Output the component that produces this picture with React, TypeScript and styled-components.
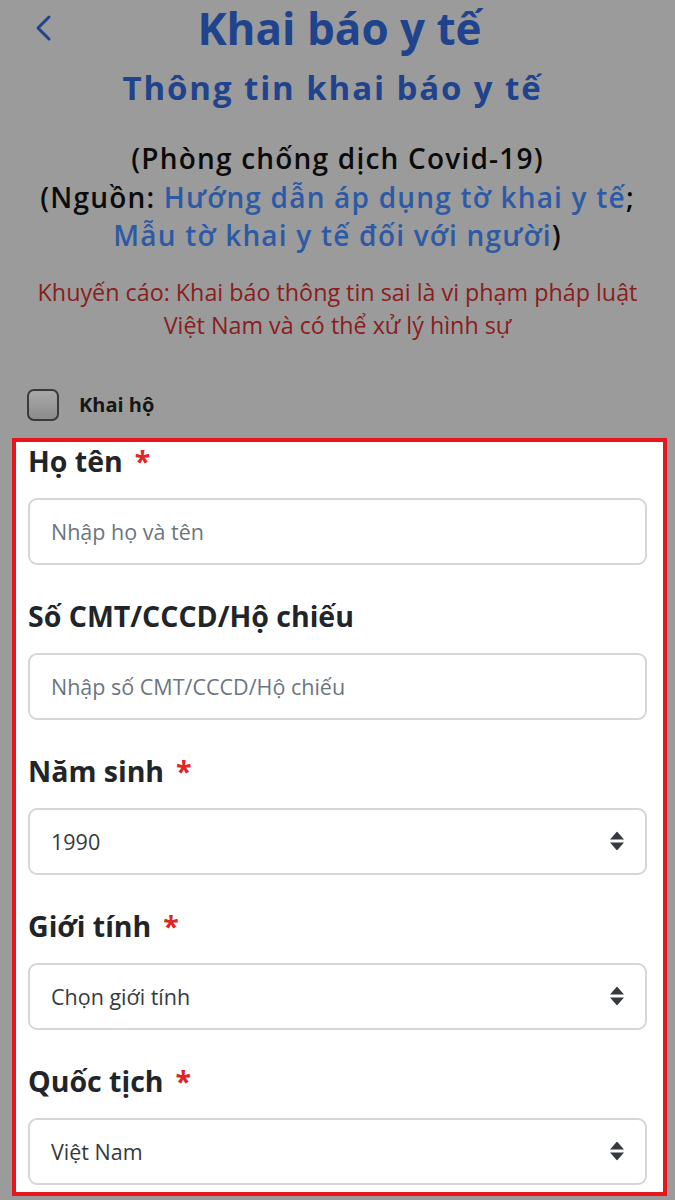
import React from "react";
import styled, { createGlobalStyle } from "styled-components";

const GlobalStyle = createGlobalStyle`
  * { box-sizing: border-box; }
  html, body { margin: 0; padding: 0; background: #9b9b9b; }
  body { font-family: "Open Sans", "Noto Sans", sans-serif; }
`;

const Page = styled.div`
  background: #9b9b9b;
  min-height: 1200px;
  padding: 2px 8px 4px 12px;
  display: flex;
  flex-direction: column;
`;

const Header = styled.header`
  display: grid;
  grid-template-columns: 1fr auto 1fr;
  align-items: center;
  margin: 0 -8px 0 -12px;
  padding: 0 30px 0 34px;
`;

const BackButton = styled.button`
  justify-self: start;
  background: none;
  border: none;
  padding: 0;
  width: 20px;
  height: 28px;
  display: flex;
  align-items: center;
  cursor: pointer;
`;

const Title = styled.h1`
  margin: 0;
  font-size: 44px;
  line-height: 52px;
  font-weight: 700;
  color: #1f438c;
  text-align: center;
`;

const Subtitle = styled.h2`
  margin: 12px 0 0;
  padding-right: 14px;
  font-size: 33px;
  line-height: 43px;
  font-weight: 700;
  letter-spacing: 1.9px;
  color: #1f438c;
  text-align: center;
`;

const Info = styled.p`
  margin: 30px -8px 0 -12px;
  font-size: 28px;
  line-height: 38.5px;
  font-weight: 600;
  letter-spacing: 1.2px;
  color: #0b0b0b;
  text-align: center;
`;

const Link = styled.a`
  color: #2c5aa6;
  text-decoration: none;
`;

const Warning = styled.p`
  margin: 21px -8px 0 -12px;
  font-size: 23.3px;
  line-height: 33px;
  font-weight: 400;
  color: #8a1d1d;
  text-align: center;
`;

const CheckRow = styled.label`
  display: flex;
  align-items: center;
  gap: 20px;
  margin: 47px 0 0 15px;
  height: 32px;
  font-size: 20px;
  font-weight: 700;
  color: #161616;
  cursor: pointer;
`;

const CheckBox = styled.span`
  width: 32px;
  height: 32px;
  border: 2px solid #3a3a3a;
  border-radius: 7px;
  background: linear-gradient(180deg, #a9a9a9 0%, #8c8c8c 100%);
`;

const Highlight = styled.section`
  margin-top: 17px;
  background: #ffffff;
  border: 4px solid #e8161c;
  padding: 0 16px 7px 12px;
  display: flex;
  flex-direction: column;
  gap: 32px;
`;

const FieldBlock = styled.div`
  display: flex;
  flex-direction: column;
  gap: 18px;
`;

const Label = styled.div`
  font-size: 28.5px;
  line-height: 38px;
  font-weight: 700;
  color: #212529;
`;

const Star = styled.span`
  color: #e02424;
  margin-left: 12px;
`;

const controlStyles = `
  width: 100%;
  height: 67px;
  border: 2px solid #d3d6da;
  border-radius: 9px;
  background: #ffffff;
  padding: 0 60px 0 21px;
  font-family: "Open Sans", "Noto Sans", sans-serif;
  font-size: 21.5px;
  color: #343a40;
  outline: none;
`;

const TextInput = styled.input`
  ${controlStyles}
  &::placeholder { color: #6c757d; opacity: 1; }
`;

const SelectWrap = styled.div`
  position: relative;
`;

const Select = styled.select`
  ${controlStyles}
  appearance: none;
  -webkit-appearance: none;
`;

const SortIcon = styled.svg`
  position: absolute;
  right: 23px;
  top: 50%;
  transform: translateY(-50%);
  pointer-events: none;
`;

const Sort = () => (
  <SortIcon width="14" height="19" viewBox="0 0 14 19">
    <path d="M7 0 L14 8 L0 8 Z" fill="#343a40" />
    <path d="M0 11 L14 11 L7 19 Z" fill="#343a40" />
  </SortIcon>
);

const Field: React.FC<{ label: string; required?: boolean; children: React.ReactNode }> = ({
  label,
  required,
  children,
}) => (
  <FieldBlock>
    <Label>
      {label}
      {required && <Star>*</Star>}
    </Label>
    {children}
  </FieldBlock>
);

const SelectField: React.FC<{ value: string; options: string[] }> = ({ value, options }) => (
  <SelectWrap>
    <Select defaultValue={value}>
      {options.map((o) => (
        <option key={o} value={o}>
          {o}
        </option>
      ))}
    </Select>
    <Sort />
  </SelectWrap>
);

export default function App() {
  return (
    <>
      <GlobalStyle />
      <Page>
        <Header>
          <BackButton aria-label="Quay lại">
            <svg width="18" height="28" viewBox="0 0 18 28">
              <path d="M15 3 L4 14 L15 25" fill="none" stroke="#1f438c" strokeWidth="3" strokeLinecap="round" strokeLinejoin="round" />
            </svg>
          </BackButton>
          <Title>Khai báo y tế</Title>
          <span />
        </Header>
        <Subtitle>Thông tin khai báo y tế</Subtitle>
        <Info>
          (Phòng chống dịch Covid-19)
          <br />
          (Nguồn: <Link href="#">Hướng dẫn áp dụng tờ khai y tế</Link>;
          <br />
          <Link href="#">Mẫu tờ khai y tế đối với người</Link>)
        </Info>
        <Warning>
          Khuyến cáo: Khai báo thông tin sai là vi phạm pháp luật
          <br />
          Việt Nam và có thể xử lý hình sự
        </Warning>
        <CheckRow>
          <CheckBox />
          Khai hộ
        </CheckRow>
        <Highlight>
          <Field label="Họ tên" required>
            <TextInput placeholder="Nhập họ và tên" />
          </Field>
          <Field label="Số CMT/CCCD/Hộ chiếu">
            <TextInput placeholder="Nhập số CMT/CCCD/Hộ chiếu" />
          </Field>
          <Field label="Năm sinh" required>
            <SelectField value="1990" options={["1988", "1989", "1990", "1991", "1992"]} />
          </Field>
          <Field label="Giới tính" required>
            <SelectField value="Chọn giới tính" options={["Chọn giới tính", "Nam", "Nữ", "Khác"]} />
          </Field>
          <Field label="Quốc tịch" required>
            <SelectField value="Việt Nam" options={["Việt Nam", "Khác"]} />
          </Field>
        </Highlight>
      </Page>
    </>
  );
}
